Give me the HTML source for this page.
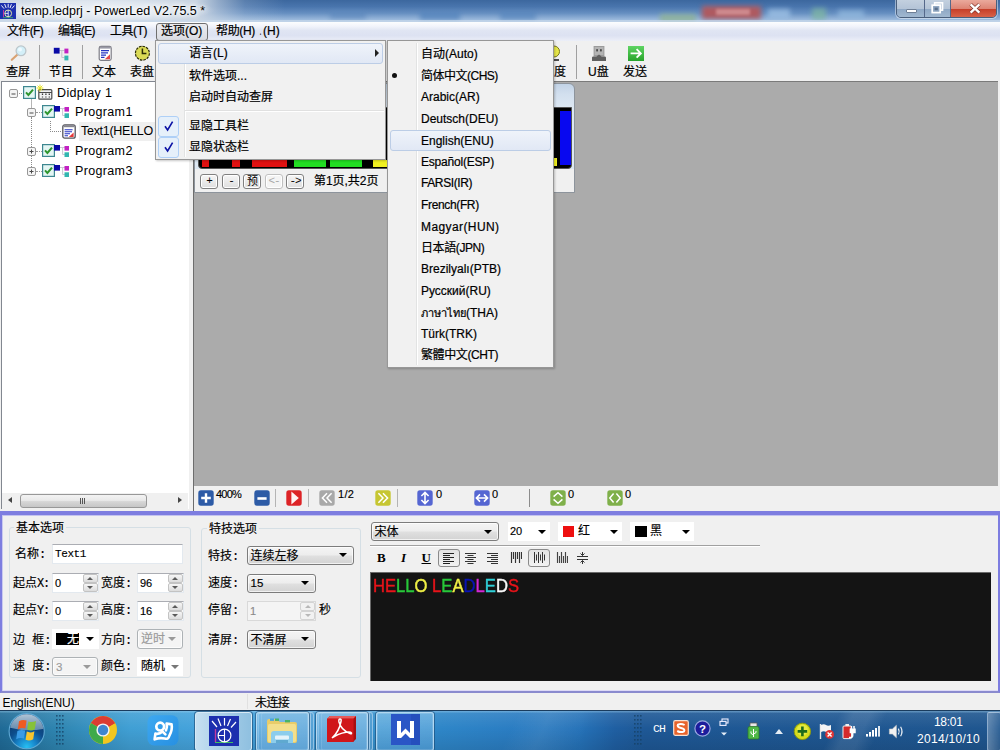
<!DOCTYPE html>
<html lang="zh">
<head>
<meta charset="utf-8">
<title>temp.ledprj - PowerLed V2.75.5 *</title>
<style>
*{box-sizing:border-box;margin:0;padding:0}
html,body{width:1000px;height:750px;overflow:hidden;background:#f0f0f0}
body{position:relative;font-family:"Liberation Sans","Noto Sans CJK SC",sans-serif;font-size:12px;color:#000;line-height:1}
.a{position:absolute}
.t{position:absolute;white-space:nowrap;line-height:14px;height:14px}
.ui{font-family:"Liberation Sans","Noto Sans CJK SC",sans-serif;font-size:12px;-webkit-text-stroke:.2px #000}
.ss{font-family:"Liberation Mono","Noto Sans CJK SC",monospace;font-size:12px;margin-top:1px;-webkit-text-stroke:.15px}
/* title bar */
#title{left:0;top:0;width:1000px;height:22px;overflow:hidden;background:
radial-gradient(ellipse 120px 14px at 95px 10px,rgba(240,244,249,.9),rgba(240,244,249,.55) 60%,rgba(240,244,249,0) 100%),
linear-gradient(90deg,rgba(203,214,227,1) 0,rgba(203,214,227,1) 196px,rgba(203,214,227,.6) 218px,rgba(203,214,227,.2) 245px,rgba(203,214,227,0) 285px,rgba(203,214,227,0) 100%),
linear-gradient(#3c679e 0,#4975ad 30%,#668fc1 60%,#93b3d8 85%,#adc7e5 100%)}
#title i{position:absolute;display:block;filter:blur(2.5px)}
#menubar{left:0;top:22px;width:1000px;height:20px;background:linear-gradient(#fcfdfe 0,#f2f4fb 22%,#e0e5f3 45%,#dde2f2 72%,#eceff8 100%);border-bottom:1px solid #a3a6ae}
#toolbar{left:0;top:41px;width:1000px;height:40px;background:#f0f0f0}
.sep{position:absolute;width:1px;background:#a0a0a0}
/* tree */
#tree{left:1px;top:81px;width:188px;height:428px;background:#fff;border-top:1px solid #828790;border-left:1px solid #828790}
#main{left:193px;top:81px;width:805px;height:405px;background:#ababab;border-top:1px solid #7a7a7a;border-left:1px solid #6d6d6d}
/* menus */
.menu{position:absolute;background:#f1f1f1;border:1px solid #979797;box-shadow:1px 1px 2px rgba(0,0,0,.22)}
.menu .gut{position:absolute;top:2px;bottom:2px;width:2px;border-left:1px solid #e2e3e3;border-right:1px solid #fff}
.hl{position:absolute;border:1px solid #bccde6;border-radius:3px;background:linear-gradient(#eff3fa,#e1e8f5)}
.pbtn{position:absolute;top:174px;width:18px;height:15px;border:1px solid #808080;border-radius:3px;background:linear-gradient(#f6f6f6,#dedede);font-family:"Liberation Mono",monospace;font-size:11px;line-height:12px;text-align:center;letter-spacing:-1px;box-shadow:inset 0 0 0 1px #fff}
/* props */
#props{left:0;top:511px;width:1000px;height:182px;background:#f0f0f0;border:2px solid #7d7de0;border-top-width:4px;border-bottom:2px solid #8a8ace;box-shadow:inset 0 1px 0 #c3c3ef,inset 1px 0 0 #c9c9f0,inset 0 -1px 0 #dcd9f6}
.grp{position:absolute;border:1px solid #d5dfe5;border-radius:3px}
.inp{position:absolute;background:#fff;border:1px solid #e3e9ef;border-top-color:#abadb3}
.cmb{position:absolute;border:1px solid #7c7c7c;border-radius:3px;background:linear-gradient(#f4f4f4 0,#ededed 48%,#e0e0e0 52%,#d3d3d3 100%);box-shadow:inset 0 0 0 1px rgba(255,255,255,.7)}
.cmb.dis{border-color:#adb2b5;background:#f4f4f4}
.arr{position:absolute;width:0;height:0;border-left:4px solid transparent;border-right:4px solid transparent;border-top:4px solid #000}
.arr.g{border-top-color:#9a9a9a}
#status{left:0;top:693px;width:1000px;height:17px;background:#f0f0f0}
#taskbar{left:0;top:710px;width:1000px;height:40px;background:linear-gradient(rgba(255,255,255,.10) 0,rgba(255,255,255,0) 45%,rgba(0,0,0,.10) 100%),linear-gradient(115deg,rgba(255,255,255,0) 762px,rgba(255,255,255,.10) 775px,rgba(255,255,255,.10) 790px,rgba(255,255,255,0) 805px),linear-gradient(115deg,rgba(255,255,255,0) 470px,rgba(255,255,255,.07) 500px,rgba(255,255,255,0) 540px),linear-gradient(90deg,#1f6a96 0,#2f86b2 60px,#409fd4 130px,#45a3dc 200px,#3f9bd6 300px,#3590cc 380px,#2e86c8 440px,#2a7cc2 520px,#2572b8 580px,#1f5fa2 615px,#1e5896 645px,#1f568f 100%);border-top:1px solid #1a3c5e}
</style>
</head>
<body>
<!-- TITLE BAR -->
<div id="title" class="a"><i style="left:702px;top:6px;width:59px;height:13px;background:#ae5a60"></i><i style="left:716px;top:9px;width:34px;height:6px;background:#cf8a8e;filter:blur(1.5px)"></i><i style="left:660px;top:14px;width:36px;height:8px;background:#8fb392;opacity:.8"></i><i style="left:812px;top:8px;width:14px;height:12px;background:#7fb8a0;opacity:.7"></i><i style="left:768px;top:9px;width:22px;height:10px;background:#9cc0e4;opacity:.8"></i><i style="left:838px;top:10px;width:26px;height:9px;background:#94bbe0;opacity:.7"></i><i style="left:420px;top:12px;width:40px;height:8px;background:#4f80ba;opacity:.7"></i><i style="left:330px;top:11px;width:36px;height:8px;background:#5a86bb;opacity:.6"></i><i style="left:500px;top:12px;width:36px;height:8px;background:#4f80ba;opacity:.6"></i><i style="left:0;top:20px;width:1000px;height:2px;background:#c9d9ea;filter:none;opacity:.7"></i></div>
<svg class="a" style="left:0;top:3px" width="16" height="16" viewBox="0 0 16 16"><rect width="16" height="16" fill="#1c2fae"/><path d="M1.4 2.4L4 5.6M4.6 1L6.2 5M8.2 .8V4.6M11.4 1.2L10 5M14.4 2.6L11.8 5.6" stroke="#fff" stroke-width=".9"/><path d="M3.5 7V14" stroke="#c03aa0" stroke-width="1"/><path d="M3 14.7H13" stroke="#3fc060" stroke-width=".8"/><circle cx="8.2" cy="10.4" r="3.4" fill="none" stroke="#f2f2a0" stroke-width=".9"/><path d="M8.2 7V14M4.8 10.4H8.2" stroke="#fff" stroke-width=".8"/></svg>
<!-- window buttons -->
<div class="a" style="left:896px;top:-1px;width:101px;height:19px;border:1px solid #4a5f7c;border-radius:0 0 5px 5px;overflow:hidden;box-shadow:0 0 0 1px rgba(255,255,255,.45)">
<div class="a" style="left:0;top:0;width:28px;height:18px;background:linear-gradient(#c3d0df 0,#b4c4d7 48%,#8fa8c5 52%,#a3bad2 100%);border-right:1px solid #55688a"></div>
<div class="a" style="left:28px;top:0;width:26px;height:18px;background:linear-gradient(#c3d0df 0,#b4c4d7 48%,#8fa8c5 52%,#a3bad2 100%);border-right:1px solid #55688a"></div>
<div class="a" style="left:54px;top:0;width:46px;height:18px;background:linear-gradient(#eaa99c 0,#dd8474 48%,#c63f2a 52%,#da664c 100%)"></div>
<div class="a" style="left:9px;top:9px;width:11px;height:4px;background:#fff;border:1px solid #6e7f96;border-radius:1px"></div>
<svg class="a" style="left:34px;top:2px" width="13" height="12" viewBox="0 0 13 12"><rect x="3.6" y=".8" width="8" height="7.4" fill="#c8d4e2" stroke="#fff" stroke-width="1.5"/><rect x="1.2" y="3.2" width="8" height="7.4" fill="#8fa6c0" stroke="#fff" stroke-width="1.7"/><rect x="3.6" y="5.6" width="3.2" height="2.6" fill="#5a6f8a"/></svg>
<svg class="a" style="left:72px;top:3px" width="12" height="11" viewBox="0 0 12 11"><path d="M1.6 1.4L10.4 9.6M10.4 1.4L1.6 9.6" stroke="#7a3028" stroke-width="3.6"/><path d="M1.6 1.4L10.4 9.6M10.4 1.4L1.6 9.6" stroke="#fff" stroke-width="2.4"/></svg>
</div>
<div class="t" style="left:21px;top:3px;font-size:12.5px;line-height:16px;height:16px;text-shadow:0 0 6px #fff,0 0 6px #fff,0 0 3px #fff">temp.ledprj - PowerLed V2.75.5 *</div>
<!-- MENUBAR -->
<div id="menubar" class="a"></div>
<div class="t ui" style="left:7px;top:24px;letter-spacing:-.65px">文件(F)</div>
<div class="t ui" style="left:58px;top:24px;letter-spacing:-.6px">编辑(E)</div>
<div class="t ui" style="left:110px;top:24px;letter-spacing:-.45px">工具(T)</div>
<div class="a" style="left:156px;top:23px;width:52px;height:18px;border:1px solid #6f6f6f;border-radius:3px;background:linear-gradient(#ebecf0,#d9dbe2)"></div>
<div class="t ui" style="left:161px;top:24px">选项(O)</div>
<div class="t ui" style="left:216px;top:24px;letter-spacing:-.35px">帮助(H)</div>
<div class="t ui" style="left:259px;top:24px"><span style="font-size:9px;color:#222;position:relative;top:-2px">ˌ</span><span style="margin-left:1px">(H)</span></div>
<!-- TOOLBAR -->
<div id="toolbar" class="a"></div>
<!-- tb: 查屏 -->
<svg class="a" style="left:8px;top:44px" width="22" height="18" viewBox="0 0 22 18"><line x1="9.5" y1="10.5" x2="3.8" y2="15.8" stroke="#d9a273" stroke-width="2.2" stroke-linecap="round"/><circle cx="13" cy="6.8" r="4.9" fill="#d3eff8" stroke="#bcc6cb" stroke-width="1.3"/><circle cx="12" cy="5.6" r="2" fill="#eefaff"/></svg>
<div class="t ui" style="left:6px;top:65px">查屏</div>
<div class="sep" style="left:39px;top:45px;height:34px"></div>
<!-- tb: 节目 -->
<svg class="a" style="left:52px;top:46px" width="20" height="16" viewBox="0 0 20 16"><path d="M7 4.5H12.5M9.8 4.5V11.5H12.5" stroke="#c4c4cc" stroke-width="1" fill="none"/><rect x="1.8" y="1.8" width="5.8" height="5.8" fill="#0a0aa6"/><rect x="12.4" y="2.6" width="4" height="4.8" fill="#c222c2"/><rect x="12.4" y="9.6" width="4" height="4.8" fill="#33b7b0"/></svg>
<div class="t ui" style="left:49px;top:65px">节目</div>
<div class="sep" style="left:82px;top:45px;height:34px"></div>
<!-- tb: 文本 -->
<svg class="a" style="left:98px;top:45px" width="15" height="17" viewBox="0 0 15 17"><rect x="1.2" y="1.4" width="12" height="14" rx="1.8" fill="#fff" stroke="#7d7d86" stroke-width="1.2"/><rect x="1.8" y="1.6" width="10.8" height="2" fill="#9a9aa6"/><path d="M3 5.7H11M3 7.9H10M3 10.1H8M3 12.3H6.5" stroke="#2433c4" stroke-width="1.2"/><path d="M12 9.2V14.2H6.8Z" fill="#e4484a"/></svg>
<div class="t ui" style="left:92px;top:65px">文本</div>
<!-- tb: 表盘 -->
<svg class="a" style="left:134px;top:45px" width="17" height="17" viewBox="0 0 17 17"><circle cx="8.4" cy="8.2" r="6.9" fill="#d9d953" stroke="#2c2c06" stroke-width="1.3" stroke-dasharray="2.6 1" /><circle cx="8.4" cy="8.2" r="6.1" fill="#dada55"/><path d="M8.4 3.6V8.6H12.4" stroke="#2c2c06" stroke-width="1.5" fill="none"/></svg>
<div class="t ui" style="left:130px;top:65px">表盘</div>
<!-- hidden-behind-menu toolbar items -->
<div class="t ui" style="left:172px;top:65px">时间</div>
<div class="t ui" style="left:214px;top:65px">计时</div>
<div class="t ui" style="left:256px;top:65px">温度</div>
<div class="t ui" style="left:542px;top:65px">亮度</div>
<svg class="a" style="left:546px;top:45px" width="16" height="17" viewBox="0 0 16 17"><circle cx="8" cy="6.5" r="5.5" fill="#e6e64a" stroke="#77771a" stroke-width="1"/><path d="M5 15H13" stroke="#222" stroke-width="1.6"/></svg>
<div class="sep" style="left:576px;top:45px;height:34px"></div>
<!-- tb: U盘 -->
<svg class="a" style="left:591px;top:45px" width="16" height="17" viewBox="0 0 16 17"><rect x="2.6" y="1" width="10.8" height="10.5" fill="#9b9b9b"/><rect x="3.6" y="2" width="8.8" height="8" fill="#b4b4b4"/><rect x="5.2" y="4.2" width="1.8" height="2.2" fill="#4a4a4a"/><rect x="9" y="4.2" width="1.8" height="2.2" fill="#4a4a4a"/><path d="M1 16V12.6Q1 11.4 2.4 11.4H5.4L8 9.6L10.6 11.4H13.6Q15 11.4 15 12.6V16Z" fill="#5f5f5f"/></svg>
<div class="t ui" style="left:588px;top:65px">U盘</div>
<!-- tb: 发送 -->
<svg class="a" style="left:627px;top:45px" width="18" height="17" viewBox="0 0 18 17"><defs><linearGradient id="gsend" x1="0" y1="0" x2="0" y2="1"><stop offset="0" stop-color="#5fd463"/><stop offset="1" stop-color="#27a42b"/></linearGradient></defs><rect x="1" y="1" width="16" height="15" fill="url(#gsend)"/><path d="M3.6 8.4H13.4M9.6 4.2L13.8 8.4L9.6 12.6" stroke="#fff" stroke-width="1.9" fill="none"/></svg>
<div class="t ui" style="left:623px;top:65px">发送</div>
<!-- TREE -->
<div id="tree" class="a"></div>
<div class="a" style="left:79px;top:122px;width:76px;height:19px;background:#efefef"></div>
<!-- dotted connectors -->
<div class="a" style="left:17px;top:93px;width:7px;height:0;border-top:1px dotted #9a9a9a"></div>
<div class="a" style="left:31px;top:99px;width:0;height:9px;border-left:1px solid #b5b5b5"></div>
<div class="a" style="left:36px;top:112px;width:6px;height:0;border-top:1px dotted #9a9a9a"></div>
<div class="a" style="left:31px;top:117px;width:0;height:50px;border-left:1px dotted #8a8a8a"></div>
<div class="a" style="left:36px;top:151px;width:6px;height:0;border-top:1px dotted #9a9a9a"></div>
<div class="a" style="left:36px;top:171px;width:6px;height:0;border-top:1px dotted #9a9a9a"></div>
<div class="a" style="left:50px;top:121px;width:11px;height:11px;border-left:1px dotted #8a8a8a;border-bottom:1px dotted #8a8a8a"></div>
<svg class="a" style="left:9px;top:89px" width="9" height="9" viewBox="0 0 9 9"><rect x=".5" y=".5" width="8" height="8" rx="1.5" fill="#f4f4f4" stroke="#979797"/><path d="M2.5 5H6.5" stroke="#4b4b4b" stroke-width="1"/></svg><svg class="a" style="left:23px;top:86px" width="13" height="13" viewBox="0 0 13 13"><rect x=".6" y=".6" width="11.8" height="11.8" fill="#e4f6f4" stroke="#3d8790" stroke-width="1.2"/><path d="M3 6.4L5.4 9L10 3.6" stroke="#2f962f" stroke-width="2" fill="none"/></svg><svg class="a" style="left:36px;top:84px" width="17" height="16" viewBox="0 0 17 16"><rect x="2.8" y="5.6" width="13" height="9.6" rx="1" fill="#f2f2f2" stroke="#4c4c4c" stroke-width="1.2"/><path d="M3 8.5H16" stroke="#4c4c4c" stroke-width="1"/><path d="M6.5 9.4V11M6.5 12.4V13.6M9.9 9.4V11M9.9 12.4V13.6M13.3 9.4V11M13.3 12.4V13.6" stroke="#3a3a3a" stroke-width="1.3"/><path d="M4 0.6V7.6M0.6 4H7.4M1.6 1.6L6.4 6.4M6.4 1.6L1.6 6.4" stroke="#e6e22a" stroke-width="1"/></svg><div class="t" style="left:57px;top:85px;font-size:12.5px;line-height:16px;height:16px;letter-spacing:.35px">Didplay 1</div>
<svg class="a" style="left:27px;top:108px" width="9" height="9" viewBox="0 0 9 9"><rect x=".5" y=".5" width="8" height="8" rx="1.5" fill="#f4f4f4" stroke="#979797"/><path d="M2.5 5H6.5" stroke="#4b4b4b" stroke-width="1"/></svg><svg class="a" style="left:42px;top:105px" width="13" height="13" viewBox="0 0 13 13"><rect x=".6" y=".6" width="11.8" height="11.8" fill="#e4f6f4" stroke="#3d8790" stroke-width="1.2"/><path d="M3 6.4L5.4 9L10 3.6" stroke="#2f962f" stroke-width="2" fill="none"/></svg><svg class="a" style="left:54px;top:105px" width="17" height="14" viewBox="0 0 17 14"><path d="M6 3.5H11M8.6 3.5V10.5H11" stroke="#c9c9d2" stroke-width="1" fill="none"/><rect x="0" y="1" width="6" height="5.6" fill="#0a0aa6"/><rect x="10.5" y="2" width="4.5" height="4.6" fill="#c222c2"/><rect x="10.5" y="8.3" width="4.5" height="4.7" fill="#33b7b0"/></svg><div class="t" style="left:75px;top:104px;font-size:12.5px;line-height:16px;height:16px;letter-spacing:.35px">Program1</div>
<svg class="a" style="left:62px;top:124px" width="14" height="15" viewBox="0 0 14 15"><rect x=".8" y=".8" width="12.4" height="13.4" rx="2" fill="#fff" stroke="#55555c" stroke-width="1.3"/><rect x="1.6" y="1.2" width="10.8" height="2" fill="#85858e"/><path d="M2.6 5.7H10.6M2.6 7.7H10M2.6 9.7H8M2.6 11.7H6" stroke="#2433c4" stroke-width="1.1"/><path d="M11.6 8.6V13H6.8Z" fill="#e4383a"/></svg><div class="t" style="left:81px;top:123px;font-size:12.5px;line-height:16px;height:16px;letter-spacing:-.28px">Text1(HELLO</div>
<svg class="a" style="left:27px;top:147px" width="9" height="9" viewBox="0 0 9 9"><rect x=".5" y=".5" width="8" height="8" rx="1.5" fill="#f4f4f4" stroke="#979797"/><path d="M2.5 4.5H6.5M4.5 2.5V6.5" stroke="#4b4b4b" stroke-width="1"/></svg><svg class="a" style="left:42px;top:144px" width="13" height="13" viewBox="0 0 13 13"><rect x=".6" y=".6" width="11.8" height="11.8" fill="#e4f6f4" stroke="#3d8790" stroke-width="1.2"/><path d="M3 6.4L5.4 9L10 3.6" stroke="#2f962f" stroke-width="2" fill="none"/></svg><svg class="a" style="left:54px;top:144px" width="17" height="14" viewBox="0 0 17 14"><path d="M6 3.5H11M8.6 3.5V10.5H11" stroke="#c9c9d2" stroke-width="1" fill="none"/><rect x="0" y="1" width="6" height="5.6" fill="#0a0aa6"/><rect x="10.5" y="2" width="4.5" height="4.6" fill="#c222c2"/><rect x="10.5" y="8.3" width="4.5" height="4.7" fill="#33b7b0"/></svg><div class="t" style="left:75px;top:143px;font-size:12.5px;line-height:16px;height:16px;letter-spacing:.35px">Program2</div>
<svg class="a" style="left:27px;top:167px" width="9" height="9" viewBox="0 0 9 9"><rect x=".5" y=".5" width="8" height="8" rx="1.5" fill="#f4f4f4" stroke="#979797"/><path d="M2.5 4.5H6.5M4.5 2.5V6.5" stroke="#4b4b4b" stroke-width="1"/></svg><svg class="a" style="left:42px;top:164px" width="13" height="13" viewBox="0 0 13 13"><rect x=".6" y=".6" width="11.8" height="11.8" fill="#e4f6f4" stroke="#3d8790" stroke-width="1.2"/><path d="M3 6.4L5.4 9L10 3.6" stroke="#2f962f" stroke-width="2" fill="none"/></svg><svg class="a" style="left:54px;top:164px" width="17" height="14" viewBox="0 0 17 14"><path d="M6 3.5H11M8.6 3.5V10.5H11" stroke="#c9c9d2" stroke-width="1" fill="none"/><rect x="0" y="1" width="6" height="5.6" fill="#0a0aa6"/><rect x="10.5" y="2" width="4.5" height="4.6" fill="#c222c2"/><rect x="10.5" y="8.3" width="4.5" height="4.7" fill="#33b7b0"/></svg><div class="t" style="left:75px;top:163px;font-size:12.5px;line-height:16px;height:16px;letter-spacing:.35px">Program3</div>
<div class="a" style="left:2px;top:493px;width:186px;height:16px;background:#f0f0f0"></div>
<div class="a" style="left:20px;top:494px;width:127px;height:14px;border:1px solid #989898;border-radius:3px;background:linear-gradient(#f3f3f3 0,#e9e9e9 45%,#d6d6d6 55%,#c6c6c6 100%)"></div>
<div class="a" style="left:80px;top:498px;width:1px;height:6px;background:#555;box-shadow:2px 0 0 #555,4px 0 0 #555"></div>
<div class="a" style="left:8px;top:497px;width:0;height:0;border-top:3.5px solid transparent;border-bottom:3.5px solid transparent;border-right:4px solid #444"></div>
<div class="a" style="left:178px;top:497px;width:0;height:0;border-top:3.5px solid transparent;border-bottom:3.5px solid transparent;border-left:4px solid #444"></div>

<!-- MAIN -->
<div id="main" class="a"></div>
<!-- preview sub window -->
<div class="a" style="left:194px;top:83px;width:381px;height:110px;border:1px solid #8d949c;border-radius:6px 6px 0 0;background:linear-gradient(#c2d3e6 0,#d2dfee 10px,#dde8f3 24px,#dde8f3 100%)"></div>
<div class="a" style="left:198px;top:107px;width:374px;height:62px;background:#000;border:1px solid #555;border-radius:0 0 4px 4px"></div>
<div class="a" style="left:195px;top:169px;width:379px;height:23px;background:#f0f0f0"></div>
<!-- led colours -->
<div class="a" style="left:202px;top:160px;width:7px;height:6.5px;background:#e01010"></div>
<div class="a" style="left:232px;top:160px;width:8px;height:6.5px;background:#e01010"></div>
<div class="a" style="left:252px;top:160px;width:35px;height:6.5px;background:#e01010"></div>
<div class="a" style="left:294px;top:160px;width:32px;height:6.5px;background:#22dd22"></div>
<div class="a" style="left:330px;top:160px;width:32px;height:6.5px;background:#22dd22"></div>
<div class="a" style="left:373px;top:160px;width:14px;height:6.5px;background:#f0f020"></div>
<div class="a" style="left:553px;top:158px;width:4px;height:8px;background:#f0f020"></div>
<div class="a" style="left:560px;top:111px;width:11px;height:54px;background:#0808f0"></div>
<!-- page buttons -->
<div class="pbtn" style="left:200px">+</div>
<div class="pbtn" style="left:222px">-</div>
<div class="pbtn" style="left:243px;font-family:'Liberation Sans','Noto Sans CJK SC',sans-serif;font-size:11px;line-height:13px">预</div>
<div class="pbtn" style="left:265px;color:#a8a8a8;border-color:#c0c0c0;background:#f4f4f4">&lt;-</div>
<div class="pbtn" style="left:286px">-&gt;</div>
<div class="t ui" style="left:314px;top:174px;letter-spacing:-.05px">第1页,共2页</div>
<!-- DROPDOWN MENU -->
<div class="menu" style="left:155px;top:40px;width:231px;height:120px"><div class="gut" style="left:28px"></div></div>
<div class="hl" style="left:158px;top:43px;width:225px;height:21px"></div>
<div class="t ui" style="left:189px;top:46px">语言(L)</div>
<div class="a" style="left:375px;top:49px;width:0;height:0;border-top:4px solid transparent;border-bottom:4px solid transparent;border-left:4px solid #222"></div>
<div class="t ui" style="left:189px;top:69px">软件选项...</div>
<div class="t ui" style="left:189px;top:90px">启动时自动查屏</div>
<div class="a" style="left:185px;top:110px;width:199px;height:2px;border-top:1px solid #e0e0e0;border-bottom:1px solid #fff"></div>
<div class="hl" style="left:158px;top:116px;width:21px;height:21px;border-color:#afd0f7;background:#e6f0fa"></div>
<div class="hl" style="left:158px;top:137px;width:21px;height:21px;border-color:#afd0f7;background:#e6f0fa"></div>
<svg class="a" style="left:163px;top:120px" width="12" height="12" viewBox="0 0 12 12"><path d="M2 6.2L4.6 10L9.6 1.6" stroke="#0c12a5" stroke-width="1.6" fill="none"/></svg>
<svg class="a" style="left:163px;top:141px" width="12" height="12" viewBox="0 0 12 12"><path d="M2 6.2L4.6 10L9.6 1.6" stroke="#0c12a5" stroke-width="1.6" fill="none"/></svg>
<div class="t ui" style="left:189px;top:119px">显隐工具栏</div>
<div class="t ui" style="left:189px;top:140px">显隐状态栏</div>
<!-- SUBMENU -->
<div class="menu" style="left:387px;top:40px;width:167px;height:328px"><div class="gut" style="left:28px"></div></div>
<div class="hl" style="left:390px;top:130px;width:161px;height:21px"></div>
<div class="a" style="left:392px;top:73px;width:5px;height:5px;border-radius:50%;background:#111"></div>
<div class="t ui sm" style="left:421px;top:47px">自动(Auto)</div>
<div class="t ui sm" style="left:421px;top:69px;letter-spacing:-.5px">简体中文(CHS)</div>
<div class="t ui sm" style="left:421px;top:90px">Arabic(AR)</div>
<div class="t ui sm" style="left:421px;top:112px">Deutsch(DEU)</div>
<div class="t ui sm" style="left:421px;top:134px">English(ENU)</div>
<div class="t ui sm" style="left:421px;top:155px;letter-spacing:-.2px">Español(ESP)</div>
<div class="t ui sm" style="left:421px;top:176px;letter-spacing:-.4px">FARSI(IR)</div>
<div class="t ui sm" style="left:421px;top:198px;letter-spacing:-.35px">French(FR)</div>
<div class="t ui sm" style="left:421px;top:220px;letter-spacing:.4px">Magyar(HUN)</div>
<div class="t ui sm" style="left:421px;top:241px;font-family:'Liberation Sans','Noto Sans CJK JP',sans-serif;letter-spacing:-.4px">日本語(JPN)</div>
<div class="t ui sm" style="left:421px;top:262px">Brezilyalı(PTB)</div>
<div class="t ui sm" style="left:421px;top:284px">Русский(RU)</div>
<div class="t ui sm" style="left:421px;top:306px"><span style="font-size:11px">ภาษาไทย</span>(THA)</div>
<div class="t ui sm" style="left:421px;top:327px">Türk(TRK)</div>
<div class="t ui sm" style="left:421px;top:348px;font-family:'Liberation Sans','Noto Sans CJK TC',sans-serif;letter-spacing:-.4px">繁體中文(CHT)</div>
<!-- BOTTOM TOOLBAR -->
<div class="a" style="left:194px;top:486px;width:806px;height:25px;background:#f0f0f0"></div>
<div class="a" style="left:193px;top:486px;width:1px;height:25px;background:#6d6d6d"></div>
<svg class="a" style="left:197.5px;top:490px" width="16" height="16" viewBox="0 0 16 16"><rect x=".3" y=".3" width="15.4" height="15.4" rx="2.6" fill="#2d5ba6"/><path d="M8 3.2V12.8M3.2 8H12.8" stroke="#fff" fill="none" stroke-width="2.4"/></svg>
<div class="t ss" style="left:216px;top:486px;font-size:11px;font-family:'Liberation Sans',sans-serif;letter-spacing:-.8px">400%</div>
<svg class="a" style="left:254px;top:490px" width="16" height="16" viewBox="0 0 16 16"><rect x=".3" y=".3" width="15.4" height="15.4" rx="2.6" fill="#2d5ba6"/><path d="M3.4 8.5H12.6" stroke="#fff" fill="none" stroke-width="2.6"/></svg>
<div class="sep" style="left:275px;top:489px;height:18px;background:#b4b4b4"></div>
<svg class="a" style="left:286px;top:490px" width="16" height="16" viewBox="0 0 16 16"><rect x=".3" y=".3" width="15.4" height="15.4" rx="2.6" fill="#dd2326"/><path d="M5.4 1.6L12.8 8L5.4 14.4Z" fill="#fff3f3"/></svg>
<div class="sep" style="left:308px;top:489px;height:18px;background:#b4b4b4"></div>
<svg class="a" style="left:318.5px;top:490px" width="16" height="16" viewBox="0 0 16 16"><rect x=".3" y=".3" width="15.4" height="15.4" rx="2.6" fill="#a9a9a9"/><path d="M8 3.2L3.4 8L8 12.8M12.6 3.2L8 8L12.6 12.8" stroke="#fff" fill="none" stroke-width="1.5"/></svg>
<div class="t ss" style="left:338px;top:486px;font-size:11px;font-family:'Liberation Sans',sans-serif;letter-spacing:.3px">1/2</div>
<svg class="a" style="left:375px;top:490px" width="16" height="16" viewBox="0 0 16 16"><rect x=".3" y=".3" width="15.4" height="15.4" rx="2.6" fill="#c6c632"/><path d="M3.4 3.2L8 8L3.4 12.8M8 3.2L12.6 8L8 12.8" stroke="#fff" fill="none" stroke-width="1.5"/></svg>
<div class="sep" style="left:397px;top:489px;height:18px;background:#b4b4b4"></div>
<svg class="a" style="left:417px;top:490px" width="16" height="16" viewBox="0 0 16 16"><rect x=".3" y=".3" width="15.4" height="15.4" rx="2.6" fill="#5566d2"/><path d="M8 2.6V13.4M4.4 6L8 2.4L11.6 6M4.4 10L8 13.6L11.6 10" stroke="#fff" fill="none" stroke-width="1.6"/></svg>
<div class="t ss" style="left:436px;top:486px;font-size:11px;font-family:'Liberation Sans',sans-serif;letter-spacing:0">0</div>
<svg class="a" style="left:473.5px;top:490px" width="16" height="16" viewBox="0 0 16 16"><rect x=".3" y=".3" width="15.4" height="15.4" rx="2.6" fill="#5566d2"/><path d="M2.6 8H13.4M6 4.4L2.4 8L6 11.6M10 4.4L13.6 8L10 11.6" stroke="#fff" fill="none" stroke-width="1.6"/></svg>
<div class="t ss" style="left:492px;top:486px;font-size:11px;font-family:'Liberation Sans',sans-serif;letter-spacing:0">0</div>
<div class="sep" style="left:529px;top:489px;height:18px;background:#8c8c8c"></div>
<svg class="a" style="left:550px;top:490px" width="16" height="16" viewBox="0 0 16 16"><rect x=".3" y=".3" width="15.4" height="15.4" rx="2.6" fill="#7fb04a"/><path d="M3.6 6.6L8 2.8L12.4 6.6M3.6 9.4L8 13.2L12.4 9.4" stroke="#fff" fill="none" stroke-width="1.5"/></svg>
<div class="t ss" style="left:568px;top:486px;font-size:11px;font-family:'Liberation Sans',sans-serif;letter-spacing:0">0</div>
<svg class="a" style="left:606.5px;top:490px" width="16" height="16" viewBox="0 0 16 16"><rect x=".3" y=".3" width="15.4" height="15.4" rx="2.6" fill="#7fb04a"/><path d="M6.6 3.6L2.8 8L6.6 12.4M9.4 3.6L13.2 8L9.4 12.4" stroke="#fff" fill="none" stroke-width="1.5"/></svg>
<div class="t ss" style="left:625px;top:486px;font-size:11px;font-family:'Liberation Sans',sans-serif;letter-spacing:0">0</div>
<!-- PROPS -->
<div id="props" class="a"></div>
<div class="grp" style="left:9px;top:527px;width:182px;height:151px"></div>
<div class="t ss" style="left:14px;top:521px;background:#f0f0f0;padding:0 2px">基本选项</div>
<div class="t ss" style="left:15px;top:547px">名称<span style="letter-spacing:-1.2px">:</span></div>
<div class="inp" style="left:52px;top:544px;width:131px;height:20px"></div><div class="t ss" style="left:55px;top:546px;font-size:11px;letter-spacing:-.4px">Text1</div>
<div class="t ss" style="left:13px;top:576px">起点<span style="letter-spacing:-1.2px">X:</span></div>
<div class="inp" style="left:52px;top:573px;width:47px;height:20px;background:#fff"></div><div class="t ss" style="left:55px;top:575px;font-size:11px;color:#000;font-family:'Liberation Sans',sans-serif;letter-spacing:0">0</div><div class="a" style="left:83px;top:574px;width:15px;height:9px;border:1px solid #c3c3c3;border-radius:2px;background:linear-gradient(#f6f6f6,#dcdcdc)"></div><div class="a" style="left:83px;top:583px;width:15px;height:9px;border:1px solid #c3c3c3;border-radius:2px;background:linear-gradient(#f6f6f6,#dcdcdc)"></div><div class="a" style="left:87px;top:577px;width:0;height:0;border-left:3px solid transparent;border-right:3px solid transparent;border-bottom:3px solid #5a5a5a"></div><div class="a" style="left:87px;top:586px;width:0;height:0;border-left:3px solid transparent;border-right:3px solid transparent;border-top:3px solid #5a5a5a"></div>
<div class="t ss" style="left:101px;top:576px">宽度<span style="letter-spacing:-1.2px">:</span></div>
<div class="inp" style="left:137px;top:573px;width:47px;height:20px;background:#fff"></div><div class="t ss" style="left:140px;top:575px;font-size:11px;color:#000;font-family:'Liberation Sans',sans-serif;letter-spacing:0">96</div><div class="a" style="left:168px;top:574px;width:15px;height:9px;border:1px solid #c3c3c3;border-radius:2px;background:linear-gradient(#f6f6f6,#dcdcdc)"></div><div class="a" style="left:168px;top:583px;width:15px;height:9px;border:1px solid #c3c3c3;border-radius:2px;background:linear-gradient(#f6f6f6,#dcdcdc)"></div><div class="a" style="left:172px;top:577px;width:0;height:0;border-left:3px solid transparent;border-right:3px solid transparent;border-bottom:3px solid #5a5a5a"></div><div class="a" style="left:172px;top:586px;width:0;height:0;border-left:3px solid transparent;border-right:3px solid transparent;border-top:3px solid #5a5a5a"></div>
<div class="t ss" style="left:13px;top:603px">起点<span style="letter-spacing:-1.2px">Y:</span></div>
<div class="inp" style="left:52px;top:601px;width:47px;height:20px;background:#fff"></div><div class="t ss" style="left:55px;top:603px;font-size:11px;color:#000;font-family:'Liberation Sans',sans-serif;letter-spacing:0">0</div><div class="a" style="left:83px;top:602px;width:15px;height:9px;border:1px solid #c3c3c3;border-radius:2px;background:linear-gradient(#f6f6f6,#dcdcdc)"></div><div class="a" style="left:83px;top:611px;width:15px;height:9px;border:1px solid #c3c3c3;border-radius:2px;background:linear-gradient(#f6f6f6,#dcdcdc)"></div><div class="a" style="left:87px;top:605px;width:0;height:0;border-left:3px solid transparent;border-right:3px solid transparent;border-bottom:3px solid #5a5a5a"></div><div class="a" style="left:87px;top:614px;width:0;height:0;border-left:3px solid transparent;border-right:3px solid transparent;border-top:3px solid #5a5a5a"></div>
<div class="t ss" style="left:101px;top:603px">高度<span style="letter-spacing:-1.2px">:</span></div>
<div class="inp" style="left:137px;top:601px;width:47px;height:20px;background:#fff"></div><div class="t ss" style="left:140px;top:603px;font-size:11px;color:#000;font-family:'Liberation Sans',sans-serif;letter-spacing:0">16</div><div class="a" style="left:168px;top:602px;width:15px;height:9px;border:1px solid #c3c3c3;border-radius:2px;background:linear-gradient(#f6f6f6,#dcdcdc)"></div><div class="a" style="left:168px;top:611px;width:15px;height:9px;border:1px solid #c3c3c3;border-radius:2px;background:linear-gradient(#f6f6f6,#dcdcdc)"></div><div class="a" style="left:172px;top:605px;width:0;height:0;border-left:3px solid transparent;border-right:3px solid transparent;border-bottom:3px solid #5a5a5a"></div><div class="a" style="left:172px;top:614px;width:0;height:0;border-left:3px solid transparent;border-right:3px solid transparent;border-top:3px solid #5a5a5a"></div>
<div class="t ss" style="left:13px;top:633px">边 框<span style="letter-spacing:-1.2px">:</span></div>
<div class="inp" style="left:52px;top:629px;width:47px;height:20px;border-color:#fff"></div><div class="a" style="left:56px;top:633px;width:23px;height:12px;background:#000"></div><div class="t ss" style="left:67px;top:632px;color:#fff">无</div><div class="arr" style="left:86px;top:637px"></div>
<div class="t ss" style="left:101px;top:633px">方向<span style="letter-spacing:-1.2px">:</span></div>
<div class="cmb dis" style="left:137px;top:629px;width:46px;height:20px"></div><div class="t ss" style="left:141px;top:632px;color:#9a9a9a">逆时</div><div class="arr g" style="left:168px;top:637px"></div>
<div class="t ss" style="left:13px;top:659px">速 度<span style="letter-spacing:-1.2px">:</span></div>
<div class="cmb dis" style="left:52px;top:657px;width:46px;height:19px"></div><div class="t ss" style="left:56px;top:658.5px;color:#9a9a9a;font-size:11.5px;font-family:'Liberation Sans',sans-serif;letter-spacing:0">3</div><div class="arr g" style="left:83px;top:664.5px"></div>
<div class="t ss" style="left:101px;top:659px">颜色<span style="letter-spacing:-1.2px">:</span></div>
<div class="inp" style="left:137px;top:657px;width:46px;height:19px;border-color:#fff"></div><div class="t ss" style="left:141px;top:659px">随机</div><div class="arr g" style="left:171px;top:665px;border-top-color:#777"></div>
<div class="grp" style="left:201px;top:528px;width:160px;height:150px"></div>
<div class="t ss" style="left:207px;top:522px;background:#f0f0f0;padding:0 2px">特技选项</div>
<div class="t ss" style="left:208px;top:549px">特技<span style="letter-spacing:-1.2px">:</span></div>
<div class="cmb" style="left:246.5px;top:545.5px;width:107px;height:19px"></div><div class="t ss" style="left:250.5px;top:549px;color:#000">连续左移</div><div class="arr" style="left:338.5px;top:553px"></div>
<div class="t ss" style="left:208px;top:576px">速度<span style="letter-spacing:-1.2px">:</span></div>
<div class="cmb" style="left:246.5px;top:573.5px;width:69px;height:19px"></div><div class="t ss" style="left:250.5px;top:575px;color:#000;font-size:11.5px;font-family:'Liberation Sans',sans-serif;letter-spacing:0">15</div><div class="arr" style="left:300.5px;top:581px"></div>
<div class="t ss" style="left:208px;top:603px">停留<span style="letter-spacing:-1.2px">:</span></div>
<div class="inp" style="left:247px;top:601px;width:69px;height:20px;background:#f4f4f4;border-color:#d9d9d9"></div><div class="t ss" style="left:250px;top:603px;font-size:11px;color:#8a8a8a;font-family:'Liberation Sans',sans-serif;letter-spacing:0">1</div><div class="a" style="left:300px;top:602px;width:15px;height:9px;border:1px solid #d3d3d3;border-radius:2px;background:#f2f2f2"></div><div class="a" style="left:300px;top:611px;width:15px;height:9px;border:1px solid #d3d3d3;border-radius:2px;background:#f2f2f2"></div><div class="a" style="left:304.5px;top:605px;width:0;height:0;border-left:3px solid transparent;border-right:3px solid transparent;border-bottom:3px solid #b8b8b8"></div><div class="a" style="left:304.5px;top:614px;width:0;height:0;border-left:3px solid transparent;border-right:3px solid transparent;border-top:3px solid #b8b8b8"></div>
<div class="t ss" style="left:319px;top:603px">秒</div>
<div class="t ss" style="left:208px;top:633px">清屏<span style="letter-spacing:-1.2px">:</span></div>
<div class="cmb" style="left:246.5px;top:629.5px;width:69px;height:19px"></div><div class="t ss" style="left:250.5px;top:633px;color:#000">不清屏</div><div class="arr" style="left:300.5px;top:637px"></div>
<div class="cmb" style="left:370.5px;top:522px;width:128px;height:19px"></div><div class="t ss" style="left:374.5px;top:524.5px;color:#000">宋体</div><div class="arr" style="left:483.5px;top:529.5px"></div>
<div class="inp" style="left:508px;top:522px;width:42px;height:19px;border-color:#fff"></div><div class="t ss" style="left:510px;top:523px;font-size:11px;font-family:'Liberation Sans',sans-serif;letter-spacing:0">20</div><div class="arr" style="left:538px;top:530px"></div>
<div class="inp" style="left:558px;top:522px;width:64px;height:19px;border-color:#fff"></div><div class="a" style="left:562.5px;top:525.5px;width:11.5px;height:11.5px;background:#ee0f0f"></div><div class="t ss" style="left:578px;top:524px">红</div><div class="arr" style="left:609.5px;top:530px"></div>
<div class="inp" style="left:630px;top:522px;width:64px;height:19px;border-color:#fff"></div><div class="a" style="left:635px;top:525.5px;width:11.5px;height:11.5px;background:#000"></div><div class="t ss" style="left:650px;top:524px">黑</div><div class="arr" style="left:682px;top:530px"></div>
<div class="a" style="left:370px;top:545px;width:390px;height:2px;border-top:1px solid #a0a0a0;border-bottom:1px solid #fff"></div>
<div class="t" style="left:377px;top:550px;font-family:'Liberation Serif',serif;font-weight:bold;font-size:13px;line-height:15px;height:15px">B</div>
<div class="t" style="left:401px;top:550px;font-family:'Liberation Serif',serif;font-weight:bold;font-style:italic;font-size:13px;line-height:15px;height:15px">I</div>
<div class="t" style="left:421.5px;top:550px;font-family:'Liberation Serif',serif;font-weight:bold;font-size:13px;line-height:15px;height:15px;text-decoration:underline">U</div>
<div class="a" style="left:437.5px;top:548.5px;width:22px;height:18px;border:1px solid #8a8a8a;border-radius:3px;background:linear-gradient(#e2e2e2,#f2f2f2)"></div>
<svg class="a" style="left:443px;top:552px" width="12" height="12" viewBox="0 0 12 12"><path d="M0 1.5H11M0 3.5H7M0 5.5H11M0 7.5H7M0 9.5H11M0 11.5H7" stroke="#222" stroke-width="1.15"/></svg>
<svg class="a" style="left:465px;top:552px" width="12" height="12" viewBox="0 0 12 12"><path d="M0 1.5H11M2.5 3.5H8.5M0 5.5H11M2.5 7.5H8.5M0 9.5H11M2.5 11.5H8.5" stroke="#333" stroke-width="1.15"/></svg>
<svg class="a" style="left:487px;top:552px" width="12" height="12" viewBox="0 0 12 12"><path d="M0 1.5H11M4 3.5H11M0 5.5H11M4 7.5H11M0 9.5H11M4 11.5H11" stroke="#333" stroke-width="1.15"/></svg>
<svg class="a" style="left:510px;top:552px" width="12" height="12" viewBox="0 0 12 12"><path d="M1.5 0V11M3.5 0V7M5.5 0V11M7.5 0V7M9.5 0V11M11.5 0V7" stroke="#333" stroke-width="1.15"/></svg>
<div class="a" style="left:527.5px;top:548.5px;width:22px;height:18px;border:1px solid #8a8a8a;border-radius:3px;background:linear-gradient(#e2e2e2,#f2f2f2)"></div>
<svg class="a" style="left:533px;top:552px" width="12" height="12" viewBox="0 0 12 12"><path d="M1.5 0V11M3.5 2.5V8.5M5.5 0V11M7.5 2.5V8.5M9.5 0V11M11.5 2.5V8.5" stroke="#333" stroke-width="1"/></svg>
<svg class="a" style="left:555.5px;top:552px" width="12" height="12" viewBox="0 0 12 12"><path d="M1.5 0V11M3.5 4V11M5.5 0V11M7.5 4V11M9.5 0V11M11.5 4V11" stroke="#444" stroke-width="1.15"/></svg>
<svg class="a" style="left:577px;top:552px" width="12" height="12" viewBox="0 0 12 12"><path d="M0 4.5H11M0 7.5H11M5.5 0V3.5M5.5 8.5V12M3.5 1.5L5.5 3.5L7.5 1.5M3.5 10.5L5.5 8.5L7.5 10.5" stroke="#333" stroke-width="1" fill="none"/></svg>
<div class="a" style="left:370px;top:572px;width:621px;height:109px;background:#141414;border-top:1px solid #6a6a6a;border-left:1px solid #6a6a6a"></div>
<div class="t" style="left:373px;top:575px;font-size:19px;line-height:22px;height:22px;transform:scaleX(.874);transform-origin:0 0;-webkit-text-stroke:.45px"><span style="color:#e8141a">H</span><span style="color:#e8141a">E</span><span style="color:#28c83a">L</span><span style="color:#28c83a">L</span><span style="color:#f0f046">O</span> <span style="color:#e8141a">L</span><span style="color:#28c83a">E</span><span style="color:#f0f046">A</span><span style="color:#0a14b4">D</span><span style="color:#d428d4">L</span><span style="color:#30d0d8">E</span><span style="color:#fafafa">D</span><span style="color:#e8141a">S</span></div>
<!-- STATUS -->
<div id="status" class="a"></div>
<div class="t" style="left:2.5px;top:696px;font-size:12px;line-height:15px;height:15px;letter-spacing:-.05px">English(ENU)</div>
<div class="t ui" style="left:255px;top:696px;letter-spacing:-.6px">未连接</div>
<div class="a" style="left:247px;top:694px;width:1px;height:15px;background:#e0e0e0"></div>
<!-- TASKBAR -->
<div id="taskbar" class="a"></div>
<div class="a" style="left:0;top:711px;width:1000px;height:2px;background:linear-gradient(rgba(160,210,240,.45),rgba(160,210,240,.1))"></div>
<!-- start orb -->
<svg class="a" style="left:7px;top:712px" width="40" height="38" viewBox="0 0 40 38">
<defs><radialGradient id="orb" cx=".5" cy=".95" r=".75"><stop offset="0" stop-color="#27c0f2"/><stop offset=".35" stop-color="#1787cc"/><stop offset=".7" stop-color="#0d4d8c"/><stop offset="1" stop-color="#0c3f76"/></radialGradient>
<linearGradient id="orbt" x1="0" y1="0" x2="0" y2="1"><stop offset="0" stop-color="#c9d6e2" stop-opacity=".95"/><stop offset="1" stop-color="#7fa0bd" stop-opacity=".75"/></linearGradient>
<clipPath id="orbc"><circle cx="19.7" cy="19.2" r="17"/></clipPath></defs>
<circle cx="19.7" cy="19.2" r="17.6" fill="url(#orb)" stroke="#5fa9d4" stroke-width="1.1"/>
<g clip-path="url(#orbc)"><path d="M0 0H40V16Q20 21 0 15Z" fill="url(#orbt)"/></g>
<path d="M12 9.2Q15.8 7 19.6 8.6L18.4 16.6Q14.8 15.2 10.8 17.4Z" fill="#ee5b22"/>
<path d="M21.4 9.4Q25 11 29 9L27.8 17.2Q24 19.4 20.2 17.6Z" fill="#86c23a"/>
<path d="M10.4 19Q14.2 17 18.2 18.6L17 26.6Q13.4 25 9.2 27.2Z" fill="#3a9be6"/>
<path d="M19.8 19.6Q23.6 21.4 27.4 19.2L26.2 27.2Q22.4 29.6 18.6 27.8Z" fill="#f7c52e"/>
</svg>
<svg class="a" style="left:56px;top:715px" width="10" height="32" viewBox="0 0 10 32"><rect x="0" y="0" width="1.6" height="1.6" fill="#163f63" fill-opacity=".75"/><rect x="3" y="0" width="1.6" height="1.6" fill="#163f63" fill-opacity=".75"/><rect x="6" y="0" width="1.6" height="1.6" fill="#163f63" fill-opacity=".75"/><rect x="0" y="4" width="1.6" height="1.6" fill="#163f63" fill-opacity=".75"/><rect x="3" y="4" width="1.6" height="1.6" fill="#163f63" fill-opacity=".75"/><rect x="6" y="4" width="1.6" height="1.6" fill="#163f63" fill-opacity=".75"/><rect x="0" y="8" width="1.6" height="1.6" fill="#163f63" fill-opacity=".75"/><rect x="3" y="8" width="1.6" height="1.6" fill="#163f63" fill-opacity=".75"/><rect x="6" y="8" width="1.6" height="1.6" fill="#163f63" fill-opacity=".75"/><rect x="0" y="12" width="1.6" height="1.6" fill="#163f63" fill-opacity=".75"/><rect x="3" y="12" width="1.6" height="1.6" fill="#163f63" fill-opacity=".75"/><rect x="6" y="12" width="1.6" height="1.6" fill="#163f63" fill-opacity=".75"/><rect x="0" y="16" width="1.6" height="1.6" fill="#163f63" fill-opacity=".75"/><rect x="3" y="16" width="1.6" height="1.6" fill="#163f63" fill-opacity=".75"/><rect x="6" y="16" width="1.6" height="1.6" fill="#163f63" fill-opacity=".75"/><rect x="0" y="20" width="1.6" height="1.6" fill="#163f63" fill-opacity=".75"/><rect x="3" y="20" width="1.6" height="1.6" fill="#163f63" fill-opacity=".75"/><rect x="6" y="20" width="1.6" height="1.6" fill="#163f63" fill-opacity=".75"/><rect x="0" y="24" width="1.6" height="1.6" fill="#163f63" fill-opacity=".75"/><rect x="3" y="24" width="1.6" height="1.6" fill="#163f63" fill-opacity=".75"/><rect x="6" y="24" width="1.6" height="1.6" fill="#163f63" fill-opacity=".75"/><rect x="0" y="28" width="1.6" height="1.6" fill="#163f63" fill-opacity=".75"/><rect x="3" y="28" width="1.6" height="1.6" fill="#163f63" fill-opacity=".75"/><rect x="6" y="28" width="1.6" height="1.6" fill="#163f63" fill-opacity=".75"/></svg>
<svg class="a" style="left:88px;top:715px" width="30" height="30" viewBox="0 0 30 30">
<circle cx="15" cy="15" r="14" fill="#f2c61f"/>
<path d="M15 15L2.88 8A14 14 0 0 1 27.12 8Z" fill="#dc3c32"/>
<path d="M15 15L2.88 8A14 14 0 0 0 15 29Z" fill="#3faa4a"/>
<path d="M15 15L27.12 8H15Z" fill="#dc3c32"/>
<circle cx="15" cy="15" r="6.6" fill="#f4f4f4"/><circle cx="15" cy="15" r="5.2" fill="#3f86cf"/></svg>
<svg class="a" style="left:147px;top:715px" width="32" height="31" viewBox="0 0 32 31">
<defs><linearGradient id="bdg" x1="0" y1="0" x2="1" y2="1"><stop offset="0" stop-color="#3ea8f0"/><stop offset="1" stop-color="#2790e2"/></linearGradient></defs>
<rect x=".5" y=".3" width="31" height="30.2" rx="6.5" fill="url(#bdg)"/>
<circle cx="13.2" cy="11.6" r="3.9" fill="none" stroke="#fff" stroke-width="2.7"/>
<path d="M8.4 18.6Q12 19.6 15.6 16.6L18.4 19.4M8.4 18.6L7.6 24.4Q13 22.4 17.6 23.6Q21.6 24.6 22.4 20.6Q25.6 14.6 24.6 9.4L19.6 8.6Q20.6 12.6 19 15.4" fill="none" stroke="#fff" stroke-width="2.6" stroke-linejoin="round" stroke-linecap="round"/></svg>
<div class="a" style="left:195px;top:712px;width:57px;height:39px;border:1px solid #d8eaf6;border-radius:3px;background:linear-gradient(90deg,#c6e0f1,#a2cbe6 60%,#8fc0e0);box-shadow:0 0 0 1px rgba(20,60,100,.55)"></div>
<svg class="a" style="left:209px;top:716px" width="30" height="30" viewBox="0 0 30 30"><rect width="30" height="30" fill="#1c2fae"/>
<path d="M3 5L8 11M9 2.5L12 10M15.5 2V9.5M21.5 3L18.5 10M27 6L22 11.5" stroke="#fff" stroke-width="1.2"/>
<path d="M6.5 13V26" stroke="#c03aa0" stroke-width="1.4"/><path d="M6 26.5H24" stroke="#3fc060" stroke-width="1"/>
<circle cx="15.5" cy="19.5" r="6.4" fill="none" stroke="#fff" stroke-width="1.2"/><path d="M15.5 13V26M9 19.5H15.5" stroke="#fff" stroke-width="1.1"/></svg>
<div class="a" style="left:261px;top:712px;width:53px;height:39px;border:1px solid rgba(200,225,245,.55);border-radius:3px;background:rgba(110,170,215,.45)"></div><div class="a" style="left:258px;top:712px;width:53px;height:39px;border:1px solid rgba(200,225,245,.55);border-radius:3px;background:rgba(110,170,215,.45)"></div><div class="a" style="left:256px;top:712px;width:53px;height:39px;border:1px solid rgba(200,228,246,.8);border-radius:3px;background:linear-gradient(rgba(150,205,240,.55),rgba(95,165,218,.5));box-shadow:inset 0 0 0 1px rgba(255,255,255,.15),0 0 0 1px rgba(20,60,100,.5)"></div>
<svg class="a" style="left:265px;top:716px" width="34" height="29" viewBox="0 0 34 29">
<path d="M2 5Q2 3 4 3H12L15 6H30Q32 6 32 8V25Q32 27 30 27H4Q2 27 2 25Z" fill="#e8cc6a"/>
<rect x="3" y="8" width="28" height="18" rx="1.5" fill="#f3df8c"/>
<rect x="5" y="2.5" width="4" height="2.4" fill="#4aa6dc"/><rect x="10" y="2.5" width="4" height="2.4" fill="#48b36a"/><rect x="20" y="4" width="5" height="2.4" fill="#48b36a"/>
<path d="M6 18Q6 15 9 15H25Q28 15 28 18V27H6Z" fill="#8ccdec"/><rect x="10" y="19.5" width="14" height="4" rx="1" fill="#e4f3fa"/><rect x="11" y="24" width="12" height="3" fill="#5fa9d0"/></svg>
<div class="a" style="left:321px;top:712px;width:52px;height:39px;border:1px solid rgba(200,225,245,.55);border-radius:3px;background:rgba(110,170,215,.45)"></div><div class="a" style="left:318px;top:712px;width:52px;height:39px;border:1px solid rgba(200,225,245,.55);border-radius:3px;background:rgba(110,170,215,.45)"></div><div class="a" style="left:316px;top:712px;width:52px;height:39px;border:1px solid rgba(200,228,246,.8);border-radius:3px;background:linear-gradient(rgba(150,205,240,.55),rgba(95,165,218,.5));box-shadow:inset 0 0 0 1px rgba(255,255,255,.15),0 0 0 1px rgba(20,60,100,.5)"></div>
<svg class="a" style="left:326px;top:715px" width="31" height="28" viewBox="0 0 31 28">
<path d="M1 4L4 1H30V24L27 27H1Z" fill="#a80e10"/><rect x="1" y="3.5" width="26.5" height="23.5" fill="#d0161a"/><path d="M1 3.5L4 1H30L27.5 3.5Z" fill="#e85a5a"/>
<path d="M6 23Q13 17 15 6.5Q15.6 4 14 4Q12.4 4 13 7Q15 15 24 18.5Q26 19.4 25.4 17.8Q24.6 16.4 20 17.2Q12 18.6 6 23Z" fill="none" stroke="#fff" stroke-width="1.5"/></svg>
<div class="a" style="left:376px;top:712px;width:58px;height:39px;border:1px solid rgba(200,228,246,.8);border-radius:3px;background:linear-gradient(rgba(150,205,240,.55),rgba(95,165,218,.5));box-shadow:inset 0 0 0 1px rgba(255,255,255,.15),0 0 0 1px rgba(20,60,100,.5)"></div>
<svg class="a" style="left:391px;top:714px" width="29" height="31" viewBox="0 0 29 31"><rect width="29" height="31" fill="#2a56c6"/><rect width="29" height="31" fill="#1e46b0" fill-opacity=".4" x="20"/>
<path d="M6 7H10V19L14.5 14.5L19 19V7H23V24H19L14.5 19.5L10 24H6Z" fill="#fff"/></svg>
<svg class="a" style="left:634px;top:715px" width="10" height="32" viewBox="0 0 10 32"><rect x="0" y="0" width="1.6" height="1.6" fill="#163f63" fill-opacity=".75"/><rect x="3" y="0" width="1.6" height="1.6" fill="#163f63" fill-opacity=".75"/><rect x="6" y="0" width="1.6" height="1.6" fill="#163f63" fill-opacity=".75"/><rect x="0" y="4" width="1.6" height="1.6" fill="#163f63" fill-opacity=".75"/><rect x="3" y="4" width="1.6" height="1.6" fill="#163f63" fill-opacity=".75"/><rect x="6" y="4" width="1.6" height="1.6" fill="#163f63" fill-opacity=".75"/><rect x="0" y="8" width="1.6" height="1.6" fill="#163f63" fill-opacity=".75"/><rect x="3" y="8" width="1.6" height="1.6" fill="#163f63" fill-opacity=".75"/><rect x="6" y="8" width="1.6" height="1.6" fill="#163f63" fill-opacity=".75"/><rect x="0" y="12" width="1.6" height="1.6" fill="#163f63" fill-opacity=".75"/><rect x="3" y="12" width="1.6" height="1.6" fill="#163f63" fill-opacity=".75"/><rect x="6" y="12" width="1.6" height="1.6" fill="#163f63" fill-opacity=".75"/><rect x="0" y="16" width="1.6" height="1.6" fill="#163f63" fill-opacity=".75"/><rect x="3" y="16" width="1.6" height="1.6" fill="#163f63" fill-opacity=".75"/><rect x="6" y="16" width="1.6" height="1.6" fill="#163f63" fill-opacity=".75"/><rect x="0" y="20" width="1.6" height="1.6" fill="#163f63" fill-opacity=".75"/><rect x="3" y="20" width="1.6" height="1.6" fill="#163f63" fill-opacity=".75"/><rect x="6" y="20" width="1.6" height="1.6" fill="#163f63" fill-opacity=".75"/><rect x="0" y="24" width="1.6" height="1.6" fill="#163f63" fill-opacity=".75"/><rect x="3" y="24" width="1.6" height="1.6" fill="#163f63" fill-opacity=".75"/><rect x="6" y="24" width="1.6" height="1.6" fill="#163f63" fill-opacity=".75"/><rect x="0" y="28" width="1.6" height="1.6" fill="#163f63" fill-opacity=".75"/><rect x="3" y="28" width="1.6" height="1.6" fill="#163f63" fill-opacity=".75"/><rect x="6" y="28" width="1.6" height="1.6" fill="#163f63" fill-opacity=".75"/></svg>
<div class="t" style="left:653px;top:722px;font-family:'Liberation Mono',monospace;font-size:11.5px;color:#fff;letter-spacing:-.8px">CH</div>
<svg class="a" style="left:673px;top:720px" width="16" height="16" viewBox="0 0 16 16"><rect x=".7" y=".7" width="14.6" height="14.6" rx="1.5" fill="#e8632b" stroke="#f8e0d0" stroke-width="1.2"/><path d="M11.6 5Q8 3 5 4.6Q3.6 7 8 8Q12.6 9 11 11.4Q8 13 4.2 11" stroke="#fff" stroke-width="2" fill="none"/></svg>
<svg class="a" style="left:694px;top:720px" width="17" height="17" viewBox="0 0 17 17"><circle cx="8.5" cy="8.5" r="7.6" fill="#1c1c9c" stroke="#9aa6e0" stroke-width="1.2"/><text x="8.5" y="12.6" text-anchor="middle" font-family="Liberation Sans, sans-serif" font-weight="bold" font-size="11.5" fill="#fff">?</text></svg>
<svg class="a" style="left:719px;top:718px" width="10" height="20" viewBox="0 0 10 20"><rect x="3" y="1" width="6" height="4" fill="none" stroke="#eef" stroke-width="1.1"/><rect x="1" y="3.4" width="6" height="4" fill="#2a63a0" stroke="#eef" stroke-width="1.1"/><path d="M2 14.4H8L5 17.6Z" fill="#e6eef8"/></svg>
<svg class="a" style="left:747px;top:722px" width="13" height="18" viewBox="0 0 13 18"><rect x="3" y="1" width="7" height="4" fill="#e8e8e8" stroke="#5a5a5a" stroke-width=".8"/><rect x="1" y="4.6" width="11" height="12.4" rx="1.5" fill="#4fb848" stroke="#2c7a2a" stroke-width=".8"/><path d="M6.5 7V15M4 9.4V11.4L6.5 13M9 9V10.6L6.5 12" stroke="#fff" stroke-width="1" fill="none"/></svg>
<div class="a" style="left:775px;top:729px;width:0;height:0;border-left:4px solid transparent;border-right:4px solid transparent;border-bottom:5px solid #e4ecf4"></div>
<svg class="a" style="left:793px;top:722px" width="19" height="19" viewBox="0 0 19 19"><circle cx="9.4" cy="9.4" r="8.2" fill="#d6dc1c" stroke="#8a9a10" stroke-width="1"/><circle cx="9.4" cy="8" r="5.6" fill="#eef25a" fill-opacity=".6"/><path d="M4.6 9.4H14.2M9.4 4.6V14.2" stroke="#1e6a1a" stroke-width="2.6"/></svg>
<svg class="a" style="left:818px;top:723px" width="17" height="17" viewBox="0 0 17 17"><path d="M2.5 1V16" stroke="#e8e8e8" stroke-width="1.4"/><path d="M3 2Q6 0.6 8 2Q10 3.4 13 2V9Q10 10.4 8 9Q6 7.6 3 9Z" fill="#f4f4f4"/><circle cx="11.6" cy="11.4" r="4.4" fill="#e03434"/><path d="M9.6 9.4L13.6 13.4M13.6 9.4L9.6 13.4" stroke="#fff" stroke-width="1.4"/></svg>
<svg class="a" style="left:841px;top:723px" width="16" height="17" viewBox="0 0 16 17"><rect x="2" y="3" width="8.5" height="12.6" rx="1" fill="#d42a2a" stroke="#f0f0f0" stroke-width="1"/><rect x="4.4" y="1" width="3.6" height="2" fill="#f0f0f0"/><path d="M9.4 5.4V9.4H14V5.4M10.4 3V5.4M13 3V5.4M11.7 9.4V12.6Q11.7 15 8 14.4" stroke="#fff" stroke-width="1.5" fill="none"/><rect x="9.4" y="5.4" width="4.6" height="4" fill="#fff"/></svg>
<svg class="a" style="left:865px;top:725px" width="16" height="12" viewBox="0 0 16 12"><rect x="1" y="9" width="2" height="2.6" fill="#fff"/><rect x="4" y="7" width="2" height="4.6" fill="#fff"/><rect x="7" y="5" width="2" height="6.6" fill="#fff"/><rect x="10" y="3" width="2" height="8.6" fill="#fff"/><rect x="13" y="1" width="2" height="10.6" fill="#fff" fill-opacity=".85"/></svg>
<svg class="a" style="left:888px;top:724px" width="17" height="15" viewBox="0 0 17 15"><path d="M1.4 5H4.4L8.4 1.2V13.8L4.4 10H1.4Z" fill="#f2f2f2" stroke="#c8c8c8" stroke-width=".6"/><path d="M10.4 4.6Q12 7.5 10.4 10.4M12.6 2.8Q15.4 7.5 12.6 12.2" stroke="#e8eef4" stroke-width="1.2" fill="none"/></svg>
<div class="t" style="left:934px;top:715px;font-size:12px;color:#fff;letter-spacing:-.3px">18:01</div>
<div class="t" style="left:917px;top:732px;font-size:12px;color:#fff;letter-spacing:.3px">2014/10/10</div>
<div class="a" style="left:987px;top:712px;width:14px;height:39px;border:1px solid rgba(200,220,240,.6);border-radius:2px;background:linear-gradient(90deg,rgba(255,255,255,.28),rgba(255,255,255,.08))"></div>
</body>
</html>
